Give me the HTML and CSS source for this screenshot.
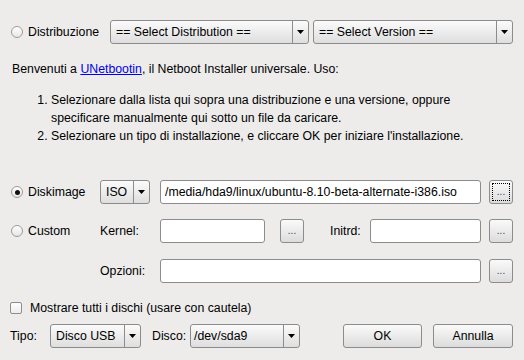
FILE: index.html
```
<!DOCTYPE html>
<html>
<head>
<meta charset="utf-8">
<link rel="stylesheet" href="styles.css">
</head>
<body>
<div class="dlg">
  <div class="row r1">
    <span class="radio"></span>
    <span class="lab lab-main">Distribuzione</span>
    <div class="combo c-dist"><span class="txt">== Select Distribution ==</span><span class="arr"><svg width="7" height="4" viewBox="0 0 7 4"><polygon points="0,0 7,0 3.5,4" fill="#000"/></svg></span></div>
    <div class="combo c-ver"><span class="txt">== Select Version ==</span><span class="arr"><svg width="7" height="4" viewBox="0 0 7 4"><polygon points="0,0 7,0 3.5,4" fill="#000"/></svg></span></div>
  </div>

  <p class="intro">Benvenuti a <a class="link" href="#">UNetbootin</a>, il Netboot Installer universale. Uso:</p>
  <ol class="steps">
    <li>Selezionare dalla lista qui sopra una distribuzione e una versione, oppure specificare manualmente qui sotto un file da caricare.</li>
    <li>Selezionare un tipo di installazione, e cliccare OK per iniziare l'installazione.</li>
  </ol>

  <div class="row r-disk">
    <span class="radio on"></span>
    <span class="lab lab-opt">Diskimage</span>
    <div class="combo c-iso"><span class="txt">ISO</span><span class="arr"><svg width="7" height="4" viewBox="0 0 7 4"><polygon points="0,0 7,0 3.5,4" fill="#000"/></svg></span></div>
    <div class="field f-path">/media/hda9/linux/ubuntu-8.10-beta-alternate-i386.iso</div>
    <div class="btn b-dots focus">...</div>
  </div>

  <div class="row r-custom">
    <span class="radio"></span>
    <span class="lab lab-opt">Custom</span>
    <span class="lab lab-kernel">Kernel:</span>
    <div class="field f-kernel"></div>
    <div class="btn b-dots b-kernel">...</div>
    <span class="lab lab-initrd">Initrd:</span>
    <div class="field f-initrd"></div>
    <div class="btn b-dots b-initrd">...</div>
  </div>

  <div class="row r-opz">
    <span class="lab lab-kernel">Opzioni:</span>
    <div class="field f-path"></div>
    <div class="btn b-dots">...</div>
  </div>

  <div class="row r-check">
    <span class="check"></span>
    <span class="lab lab-check">Mostrare tutti i dischi (usare con cautela)</span>
  </div>

  <div class="row r-bottom">
    <span class="lab lab-tipo">Tipo:</span>
    <div class="combo c-tipo"><span class="txt">Disco USB</span><span class="arr"><svg width="7" height="4" viewBox="0 0 7 4"><polygon points="0,0 7,0 3.5,4" fill="#000"/></svg></span></div>
    <span class="lab lab-disco">Disco:</span>
    <div class="combo c-disco"><span class="txt t-disco">/dev/sda9</span><span class="arr"><svg width="7" height="4" viewBox="0 0 7 4"><polygon points="0,0 7,0 3.5,4" fill="#000"/></svg></span></div>
    <div class="btn b-ok">OK</div>
    <div class="btn b-cancel">Annulla</div>
  </div>
</div>
</body>
</html>
```
FILE: styles.css
```
html, body {
  margin: 0;
  padding: 0;
}
body {
  width: 524px;
  height: 360px;
  overflow: hidden;
  background: #edeceb;
  font-family: "Liberation Sans", Arial, sans-serif;
  font-size: 12.3px;
  color: #000;
}
.dlg {
  padding-top: 20px;
}
.row {
  display: flex;
  align-items: center;
  height: 24px;
  box-sizing: border-box;
}
.r1 { padding-left: 11px; }
.r-disk { padding-left: 11px; margin-top: 35px; }
.r-custom { padding-left: 11px; margin-top: 15px; }
.r-opz { padding-left: 100px; margin-top: 16px; }
.r-check { padding-left: 10px; margin-top: 17px; height: 16px; }
.r-bottom { padding-left: 10px; margin-top: 8px; }

.lab {
  white-space: nowrap;
  box-sizing: border-box;
  flex: none;
}
.lab-main { width: 88px; padding-left: 6px; }
.lab-opt { width: 78px; padding-left: 6px; }
.lab-kernel { width: 60px; }
.lab-initrd { width: 40px; margin-left: 26px; }
.lab-check { margin-left: 8px; }
.lab-tipo { width: 40px; }
.lab-disco { width: 38px; margin-left: 11px; }

.radio {
  flex: none;
  width: 12px;
  height: 12px;
  box-sizing: border-box;
  border: 1px solid #9b9b9b;
  border-radius: 50%;
  background: linear-gradient(#ffffff, #e6e6e6);
  position: relative;
  margin-right: -1px;
}
.radio.on::after {
  content: "";
  position: absolute;
  left: 2.5px;
  top: 2.5px;
  width: 5px;
  height: 5px;
  border-radius: 50%;
  background: #111;
}
.check {
  flex: none;
  width: 12px;
  height: 12px;
  box-sizing: border-box;
  border: 1px solid #8e8e8e;
  border-radius: 2px;
  background: linear-gradient(#ffffff, #ececec);
}

.combo {
  flex: none;
  display: flex;
  height: 24px;
  box-sizing: border-box;
  border: 1px solid #8c8c8c;
  border-radius: 3px;
  background: linear-gradient(#fbfbfb, #dedede);
}
.combo .txt {
  flex: 1;
  display: flex;
  align-items: center;
  padding-left: 5px;
  white-space: nowrap;
  overflow: hidden;
}
.combo .t-disco { padding-left: 3px; }
.combo .arr {
  flex: none;
  width: 15px;
  border-left: 1px solid #8c8c8c;
  display: flex;
  align-items: center;
  justify-content: center;
}
.c-dist { width: 199px; }
.c-ver { width: 200px; margin-left: 4px; }
.c-iso { width: 50px; }
.c-tipo { width: 91px; }
.c-disco { width: 110px; }

.field {
  flex: none;
  height: 24px;
  box-sizing: border-box;
  border: 1px solid #8c8c8c;
  border-radius: 3px;
  background: #fff;
  padding-left: 4px;
  display: flex;
  align-items: center;
  white-space: nowrap;
  overflow: hidden;
}
.f-path { width: 321px; margin-left: 10px; }
.r-opz .f-path { margin-left: 0; }
.f-kernel { width: 105px; }
.f-initrd { width: 111px; }

.btn {
  flex: none;
  position: relative;
  height: 24px;
  box-sizing: border-box;
  border: 1px solid #8c8c8c;
  border-radius: 3px;
  background: linear-gradient(#fafafa, #dcdcdc);
  display: flex;
  align-items: center;
  justify-content: center;
}
.b-dots {
  width: 24px;
  margin-left: 8px;
  font-size: 10px;
  color: #444;
  padding-bottom: 2px;
}
.b-kernel { margin-left: 15px; }
.b-initrd { margin-left: 8px; }
.btn.focus::after {
  content: "";
  position: absolute;
  left: 2px;
  top: 2px;
  right: 2px;
  bottom: 2px;
  border: 1px dotted #000;
}
.b-ok { width: 79px; margin-left: 43px; }
.b-cancel { width: 80px; margin-left: 11px; }

.intro {
  margin: 16px 0 0 12px;
  line-height: 18px;
}
.link {
  color: #0000ee;
  text-decoration: underline;
}
.steps {
  margin: 13px 0 0 0;
  padding-left: 51px;
  line-height: 18px;
  width: 420px;
}
```
